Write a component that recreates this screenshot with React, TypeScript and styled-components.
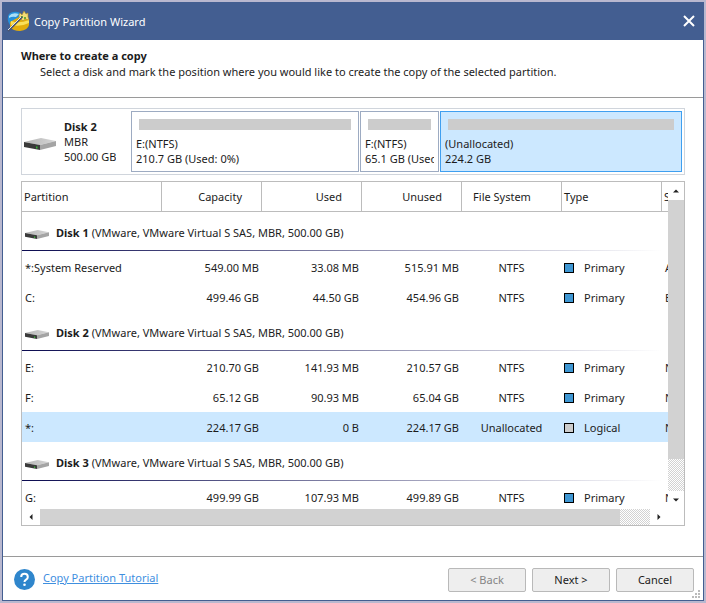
import React from "react";
import styled, { createGlobalStyle } from "styled-components";

const GlobalStyle = createGlobalStyle`
  * { box-sizing: border-box; }
  html, body { margin: 0; }
  body {
    background: #b9b8cf;
    color: #1c1c1c;
    font: 11px/15px "Noto Sans", "Open Sans", sans-serif;
  }
`;

const Desktop = styled.div`
  height: 100vh;
  min-height: 400px;
  padding: 2px;
`;

const Dialog = styled.main`
  position: relative;
  display: flex;
  flex-direction: column;
  height: 100%;
  background: #fff;
  border: 1px solid #435e91;
  border-top: 0;
`;

const TitleBar = styled.header`
  display: flex;
  align-items: center;
  gap: 4px;
  flex: none;
  height: 38px;
  padding: 0 8px 0 4px;
  background: #435e91;
  color: #fff;
`;

const Title = styled.h1`
  flex: 1;
  margin: 0;
  font-size: 11px;
  font-weight: 400;
`;

const CloseButton = styled.button`
  display: flex;
  padding: 0;
  border: 0;
  background: none;
  color: #fff;
`;

const Intro = styled.section`
  flex: none;
  height: 58px;
  padding: 8px 18px 0;
  border-bottom: 1px solid #9a9a9a;
`;

const IntroTitle = styled.h2`
  margin: 0;
  font-size: 11px;
  line-height: 16px;
`;

const IntroText = styled.p`
  margin: 0;
  padding-left: 19px;
  line-height: 16px;
`;

const Content = styled.section`
  display: flex;
  flex-direction: column;
  gap: 6px;
  flex: 1;
  min-height: 0;
  padding: 10px 18px 30px;
`;

const DiskMap = styled.div`
  display: flex;
  flex: none;
  height: 67px;
  padding: 2px;
  border: 1px solid #d0d5dc;
`;

const DiskInfo = styled.div`
  display: flex;
  align-items: center;
  gap: 8px;
  flex: none;
  width: 107px;
  & > svg { margin-top: 4px; }
`;

const Segments = styled.div`
  display: grid;
  grid-template-columns: 228fr 79fr 242fr;
  gap: 1px;
  flex: 1;
  min-width: 0;
`;

const Segment = styled.button<{ $selected?: boolean }>`
  display: flex;
  flex-direction: column;
  justify-content: flex-start;
  min-width: 0;
  overflow: hidden;
  padding: 7px 4px 0;
  border: 1px solid ${(p) => (p.$selected ? "#3f9ff0" : "#9dabc2")};
  background: ${(p) => (p.$selected ? "#cce8ff" : "#fff")};
  color: inherit;
  font: inherit;
  text-align: left;
`;

const Usage = styled.span`
  flex: none;
  height: 11px;
  margin: 0 3px 6px;
  background: #ccc;
`;

const Line = styled.span`
  display: block;
  overflow: hidden;
  white-space: nowrap;
`;

const ListFrame = styled.div`
  display: grid;
  grid-template: minmax(0, 1fr) 16px / minmax(0, 1fr) 16px;
  flex: 1;
  min-height: 0;
  border: 1px solid #bcbcbc;
`;

const Viewport = styled.div`
  overflow: hidden;
`;

const Table = styled.table`
  width: 739px;
  table-layout: fixed;
  border-collapse: separate;
  border-spacing: 0;
`;

type Align = "left" | "right" | "center";

const HeadCell = styled.th<{ $align: Align }>`
  height: 30px;
  padding: 0 19px 0 ${(p) => (p.$align === "left" ? 2 : 0)}px;
  border-right: 1px solid #bcbcbc;
  border-bottom: 1px solid #bcbcbc;
  font-weight: 400;
  text-align: ${(p) => p.$align};
  white-space: nowrap;
`;

const GroupCell = styled.th`
  height: 40px;
  padding: 0;
  font-weight: 400;
  text-align: left;
`;

const GroupTitle = styled.div`
  display: flex;
  align-items: center;
  gap: 7px;
  height: 38px;
  padding: 3px 3px 0;
  & > svg { margin-top: 4px; }
`;

const GroupRule = styled.div`
  width: 640px;
  height: 2px;
  border-bottom: 1px solid transparent;
  background: linear-gradient(90deg, #0a0a50, #fff) padding-box;
`;

const Row = styled.tr<{ $selected?: boolean }>`
  background: ${(p) => (p.$selected ? "#cce8ff" : "transparent")};
`;

const Cell = styled.td<{ $align: Align }>`
  height: 30px;
  padding: 1px 3px 0 ${(p) => (p.$align === "left" ? 3 : 2)}px;
  text-align: ${(p) => p.$align};
  white-space: nowrap;
`;

const TypeCell = styled(Cell)`
  padding-left: 2px;
`;

const TypeLabel = styled.span`
  display: flex;
  align-items: center;
  gap: 10px;
`;

const Swatch = styled.span<{ $color: string }>`
  width: 10px;
  height: 10px;
  border: 1px solid #000;
  background: ${(p) => p.$color};
`;

const ScrollBar = styled.div<{ $vertical?: boolean }>`
  display: flex;
  flex-direction: ${(p) => (p.$vertical ? "column" : "row")};
  min-width: 0;
  min-height: 0;
`;

const ArrowButton = styled.button`
  display: flex;
  align-items: center;
  justify-content: center;
  flex: 0 0 18px;
  padding: 0;
  border: 0;
  background: #fff;
`;

const Track = styled.div<{ $vertical?: boolean }>`
  display: flex;
  flex-direction: ${(p) => (p.$vertical ? "column" : "row")};
  flex: 1;
  background: repeating-conic-gradient(#d2d2d2 0 25%, #fff 0 50%) 0 0 / 2px 2px;
`;

const Thumb = styled.div<{ $share: number }>`
  flex: 0 0 ${(p) => p.$share}%;
  background: #d2d2d2;
`;

const Footer = styled.footer`
  display: flex;
  align-items: center;
  gap: 6px;
  flex: none;
  height: 44px;
  padding: 2px 9px 0 11px;
  border-top: 1px solid #9a9a9a;
`;

const TutorialLink = styled.a`
  margin-right: auto;
  padding: 0 0 4px 2px;
  color: #3f8fdf;
`;

const FooterButton = styled.button`
  width: 78px;
  height: 24px;
  padding: 0;
  border: 1px solid #b9b9b9;
  border-radius: 2px;
  background: #eee;
  color: #1c1c1c;
  font: inherit;
  &:disabled { color: #858585; }
`;

const Grip = styled.svg`
  position: absolute;
  right: 3px;
  bottom: 2px;
`;

const DriveIcon = ({ width }: { width: number }) => (
  <svg width={width} height={width * 0.375} viewBox="0 0 32 12" aria-hidden="true">
    <defs>
      <linearGradient id="drive-top">
        <stop offset="0" stopColor="#b4b4b4" />
        <stop offset="1" stopColor="#d6d6d6" />
      </linearGradient>
    </defs>
    <path d="M0 4 17 0l15 3-16 4z" fill="url(#drive-top)" />
    <path d="M0 4l16 3v5L0 9z" fill="#3a3a3a" />
    <path d="M16 7l16-4v5L16 12z" fill="#a4a4a4" />
    <path d="M12 8.500h1.500v2H12z" fill="#35b535" />
  </svg>
);

const AppIcon = () => (
  <svg width="23" height="22" viewBox="0 0 23 22" aria-hidden="true">
    <path d="M1 7q0-4 5-5 4-1 7 1v8L3 15Q0 11 1 7z" fill="#2590dc" />
    <path d="M2 6q3-4 10-2L9 7Q5 6 2 8z" fill="#aadff8" />
    <path d="M3 12l9-5 10 2v6q-1 5-9 6-7 0-10-4z" fill="#e3ad0c" />
    <path d="M4 11q8 3 18-1v3q-8 4-18 2z" fill="#fae05a" />
    <path d="M12 5 13 3l2 2 2-4 2 3 2-1v4l1 3-4-1-2 2-2-2-2-1z" fill="#f3dc78" stroke="#b08b25" strokeWidth=".6" />
    <path d="M14 6h2v2h-2zM17 7h2v2h-2z" fill="#67a83c" />
    <path d="M1 21 15 7" stroke="#4b5470" strokeWidth="2" />
    <path d="M1 20 14 7" stroke="#dfe6ef" strokeWidth="1" />
  </svg>
);

const Arrow = ({ turn }: { turn: number }) => (
  <svg width="8" height="8" viewBox="0 0 8 8" aria-hidden="true">
    <path d="M1 5.500 4 2.500l3 3z" fill="#222" transform={`rotate(${turn} 4 4)`} />
  </svg>
);

const COLUMNS: { label: string; width: number; align: Align }[] = [
  { label: "Partition", width: 140, align: "left" },
  { label: "Capacity", width: 100, align: "right" },
  { label: "Used", width: 100, align: "right" },
  { label: "Unused", width: 100, align: "right" },
  { label: "File System", width: 100, align: "center" },
  { label: "Type", width: 100, align: "left" },
  { label: "Status", width: 99, align: "left" },
];

const DISKS = [
  {
    name: "Disk 1",
    partitions: [
      ["*:System Reserved", "549.00 MB", "33.08 MB", "515.91 MB", "NTFS", "Primary", "Active"],
      ["C:", "499.46 GB", "44.50 GB", "454.96 GB", "NTFS", "Primary", "Boot"],
    ],
  },
  {
    name: "Disk 2",
    partitions: [
      ["E:", "210.70 GB", "141.93 MB", "210.57 GB", "NTFS", "Primary", "None"],
      ["F:", "65.12 GB", "90.93 MB", "65.04 GB", "NTFS", "Primary", "None"],
      ["*:", "224.17 GB", "0 B", "224.17 GB", "Unallocated", "Logical", "None"],
    ],
  },
  {
    name: "Disk 3",
    partitions: [["G:", "499.99 GB", "107.93 MB", "499.89 GB", "NTFS", "Primary", "None"]],
  },
];

const SEGMENTS = [
  { label: "E:(NTFS)", size: "210.7 GB (Used: 0%)" },
  { label: "F:(NTFS)", size: "65.1 GB (Used: 0%)" },
  { label: "(Unallocated)", size: "224.2 GB", selected: true },
];

export default function App() {
  return (
    <Desktop>
      <GlobalStyle />
      <Dialog>
        <TitleBar>
          <AppIcon />
          <Title>Copy Partition Wizard</Title>
          <CloseButton aria-label="Close">
            <svg width="12" height="12" viewBox="0 0 12 12">
              <path d="M1 1l10 10M11 1 1 11" stroke="currentColor" strokeWidth="2" />
            </svg>
          </CloseButton>
        </TitleBar>
        <Intro>
          <IntroTitle>Where to create a copy</IntroTitle>
          <IntroText>
            Select a disk and mark the position where you would like to create the copy of the selected partition.
          </IntroText>
        </Intro>
        <Content>
          <DiskMap>
            <DiskInfo>
              <DriveIcon width={32} />
              <div>
                <b>Disk 2</b>
                <Line>MBR</Line>
                <Line>500.00 GB</Line>
              </div>
            </DiskInfo>
            <Segments>
              {SEGMENTS.map((s) => (
                <Segment key={s.label} $selected={s.selected} aria-pressed={!!s.selected}>
                  <Usage />
                  <Line>{s.label}</Line>
                  <Line>{s.size}</Line>
                </Segment>
              ))}
            </Segments>
          </DiskMap>
          <ListFrame>
            <Viewport>
              <Table>
                <colgroup>
                  {COLUMNS.map((c) => (
                    <col key={c.label} width={c.width} />
                  ))}
                </colgroup>
                <thead>
                  <tr>
                    {COLUMNS.map((c) => (
                      <HeadCell key={c.label} scope="col" $align={c.align}>
                        {c.label}
                      </HeadCell>
                    ))}
                  </tr>
                </thead>
                {DISKS.map((disk) => (
                  <tbody key={disk.name}>
                    <tr>
                      <GroupCell colSpan={7} scope="rowgroup">
                        <GroupTitle>
                          <DriveIcon width={24} />
                          <span>
                            <b>{disk.name}</b> (VMware, VMware Virtual S SAS, MBR, 500.00 GB)
                          </span>
                        </GroupTitle>
                        <GroupRule />
                      </GroupCell>
                    </tr>
                    {disk.partitions.map((cells) => (
                      <Row key={cells[0]} $selected={cells[4] === "Unallocated"}>
                        {cells.map((text, i) => {
                          const { label, align } = COLUMNS[i];
                          return label === "Type" ? (
                            <TypeCell key={label} $align={align}>
                              <TypeLabel>
                                <Swatch $color={text === "Primary" ? "#3f97d3" : "#ccc"} />
                                {text}
                              </TypeLabel>
                            </TypeCell>
                          ) : (
                            <Cell key={label} $align={align}>
                              {text}
                            </Cell>
                          );
                        })}
                      </Row>
                    ))}
                  </tbody>
                ))}
              </Table>
            </Viewport>
            <ScrollBar $vertical>
              <ArrowButton aria-label="Scroll up"><Arrow turn={0} /></ArrowButton>
              <Track $vertical><Thumb $share={89} /></Track>
              <ArrowButton aria-label="Scroll down"><Arrow turn={180} /></ArrowButton>
            </ScrollBar>
            <ScrollBar>
              <ArrowButton aria-label="Scroll left"><Arrow turn={270} /></ArrowButton>
              <Track><Thumb $share={95} /></Track>
              <ArrowButton aria-label="Scroll right"><Arrow turn={90} /></ArrowButton>
            </ScrollBar>
          </ListFrame>
        </Content>
        <Footer>
          <svg width="21" height="21" viewBox="0 0 21 21" aria-hidden="true">
            <circle cx="10.500" cy="10.500" r="10.500" fill="#2f86cc" />
            <path d="M7.200 8q0-3.200 3.300-3.200T13.800 8q0 1.500-1.700 2.600T10.500 13" fill="none" stroke="#fff" strokeWidth="2" />
            <circle cx="10.500" cy="15.800" r="1.300" fill="#fff" />
          </svg>
          <TutorialLink href="#tutorial">Copy Partition Tutorial</TutorialLink>
          <FooterButton disabled>&lt; Back</FooterButton>
          <FooterButton>Next &gt;</FooterButton>
          <FooterButton>Cancel</FooterButton>
        </Footer>
        <Grip width="8" height="8" viewBox="0 0 8 8" aria-hidden="true">
          <path d="M6 0h2v2H6zM3 3h2v2H3zM6 3h2v2H6zM0 6h2v2H0zM3 6h2v2H3zM6 6h2v2H6z" fill="#bbb" />
        </Grip>
      </Dialog>
    </Desktop>
  );
}
